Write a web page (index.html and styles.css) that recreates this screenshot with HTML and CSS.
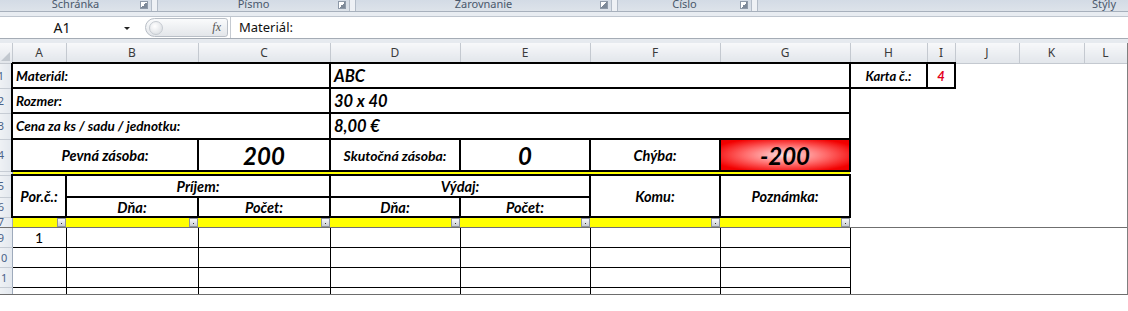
FILE: index.html
```html
<!DOCTYPE html>
<html lang="sk">
<head>
    <meta charset="UTF-8">
    <title>Karta materiálu</title>
    <link rel="stylesheet" href="styles.css">
</head>
<body>
    <div class="ribbon">
        <div class="group w-clip"><span>Schránka</span><i class="launch"></i></div>
        <div class="group w-font"><span>Písmo</span><i class="launch"></i></div>
        <div class="group w-align"><span>Zarovnanie</span><i class="launch"></i></div>
        <div class="group w-num"><span>Číslo</span><i class="launch"></i></div>
        <div class="group w-style right"><span>Štýly</span></div>
    </div>
    <div class="ribbon-foot"></div>

    <div class="formula">
        <div class="namebox"><span class="ref">A1</span><span class="caret"></span></div>
        <div class="fxpill"><span class="knob"></span><span class="fx">fx</span></div>
        <div class="input">Materiál:</div>
    </div>
    <div class="formula-gap"></div>

    <div class="sheet">
        <table class="grid">
            <colgroup>
                <col class="c-rh"><col class="c-a"><col class="c-b"><col class="c-c"><col class="c-d">
                <col class="c-e"><col class="c-f"><col class="c-g"><col class="c-h"><col class="c-i">
                <col class="c-j"><col class="c-k"><col class="c-l">
            </colgroup>
            <tr class="hdr">
                <th class="corner"><span class="tri"></span></th>
                <th>A</th><th>B</th><th>C</th><th>D</th><th>E</th><th>F</th>
                <th>G</th><th>H</th><th>I</th><th>J</th><th>K</th><th>L</th>
            </tr>
            <tr class="r1">
                <th class="rh"><span>1</span></th>
                <td colspan="3" class="b2 lbl">Materiál:</td>
                <td colspan="4" class="b2 val">ABC</td>
                <td class="b2 karta">Karta č.:</td>
                <td class="b2 karta-no">4</td>
                <td></td><td></td><td></td>
            </tr>
            <tr class="r2">
                <th class="rh"><span>2</span></th>
                <td colspan="3" class="b2 lbl">Rozmer:</td>
                <td colspan="4" class="b2 val">30 x 40</td>
                <td></td><td></td><td></td><td></td><td></td>
            </tr>
            <tr class="r3">
                <th class="rh"><span>3</span></th>
                <td colspan="3" class="b2 lbl">Cena za ks / sadu / jednotku:</td>
                <td colspan="4" class="b2 val">8,00 €</td>
                <td></td><td></td><td></td><td></td><td></td>
            </tr>
            <tr class="r4">
                <th class="rh"><span>4</span></th>
                <td colspan="2" class="b2 cap">Pevná zásoba:</td>
                <td class="b2 big">200</td>
                <td class="b2 cap small">Skutočná zásoba:</td>
                <td class="b2 big">0</td>
                <td class="b2 cap">Chýba:</td>
                <td class="b2 big missing">-200</td>
                <td></td><td></td><td></td><td></td><td></td>
            </tr>
            <tr class="sep">
                <th class="rh"></th>
                <td colspan="7" class="stripe"></td>
                <td></td><td></td><td></td><td></td><td></td>
            </tr>
            <tr class="r5">
                <th class="rh"><span>5</span></th>
                <td rowspan="2" class="b2 head">Por.č.:</td>
                <td colspan="2" class="b2 head">Príjem:</td>
                <td colspan="2" class="b2 head">Výdaj:</td>
                <td rowspan="2" class="b2 head">Komu:</td>
                <td rowspan="2" class="b2 head">Poznámka:</td>
                <td></td><td></td><td></td><td></td><td></td>
            </tr>
            <tr class="r6">
                <th class="rh"><span>6</span></th>
                <td class="b2 head">Dňa:</td>
                <td class="b2 head">Počet:</td>
                <td class="b2 head">Dňa:</td>
                <td class="b2 head">Počet:</td>
                <td></td><td></td><td></td><td></td><td></td>
            </tr>
            <tr class="r7 frozen">
                <th class="rh"><span>7</span></th>
                <td class="flt"><i class="drop"></i></td>
                <td class="flt"><i class="drop"></i></td>
                <td class="flt"><i class="drop"></i></td>
                <td class="flt"><i class="drop"></i></td>
                <td class="flt"><i class="drop"></i></td>
                <td class="flt"><i class="drop"></i></td>
                <td class="flt"><i class="drop"></i></td>
                <td></td><td></td><td></td><td></td><td></td>
            </tr>
            <tr class="row">
                <th class="rh"><span>9</span></th>
                <td class="b1 no">1</td><td class="b1"></td><td class="b1"></td><td class="b1"></td>
                <td class="b1"></td><td class="b1"></td><td class="b1"></td>
                <td></td><td></td><td></td><td></td><td></td>
            </tr>
            <tr class="row">
                <th class="rh"><span>10</span></th>
                <td class="b1"></td><td class="b1"></td><td class="b1"></td><td class="b1"></td>
                <td class="b1"></td><td class="b1"></td><td class="b1"></td>
                <td></td><td></td><td></td><td></td><td></td>
            </tr>
            <tr class="row">
                <th class="rh"><span>11</span></th>
                <td class="b1"></td><td class="b1"></td><td class="b1"></td><td class="b1"></td>
                <td class="b1"></td><td class="b1"></td><td class="b1"></td>
                <td></td><td></td><td></td><td></td><td></td>
            </tr>
            <tr class="row">
                <th class="rh"><span>12</span></th>
                <td class="b1"></td><td class="b1"></td><td class="b1"></td><td class="b1"></td>
                <td class="b1"></td><td class="b1"></td><td class="b1"></td>
                <td></td><td></td><td></td><td></td><td></td>
            </tr>
        </table>
    </div>
</body>
</html>
```

FILE: styles.css
```css
body {
    margin: 0;
    background-color: #fff;
    font-family: "Noto Sans", Arial, sans-serif;
    overflow: hidden;
}

/* ribbon bottom strip */
.ribbon {
    display: flex;
    gap: 5px;
    height: 11px;
    background-color: #eef1f5;
    border-bottom: 1px solid #a7b0bc;
    overflow: hidden;
}

.group {
    position: relative;
    height: 11px;
    background: linear-gradient(#d3dbe5, #dde3ea);
    border-left: 1px solid #b3bcc8;
    border-right: 1px solid #b3bcc8;
    box-sizing: border-box;
    text-align: center;
    font-size: 11px;
    line-height: 11px;
    color: #4a586b;
}

.group span {
    display: block;
    margin-top: -2px;
}

.group.right {
    text-align: right;
    padding-right: 12px;
    border-right: none;
}

.w-clip { width: 152px; border-left: none; }
.w-font { width: 193px; }
.w-align { width: 257px; }
.w-num { width: 135px; }
.w-style { flex: 1; }

.launch {
    position: absolute;
    right: 3px;
    top: 1px;
    width: 6px;
    height: 6px;
    border: 1px solid #8d99a8;
    background: linear-gradient(135deg, #fff 50%, #7d8998 50%);
}

.ribbon-foot {
    height: 4px;
    background-color: #e8ecf1;
    border-bottom: 1px solid #bfc6cf;
}

/* formula bar */
.formula {
    display: flex;
    align-items: center;
    height: 21px;
    background-color: #fff;
    border-bottom: 1px solid #a5acb5;
    font-size: 13px;
}

.namebox {
    display: flex;
    align-items: center;
    width: 142px;
    height: 21px;
}

.ref {
    width: 124px;
    text-align: center;
    font-size: 14px;
    color: #111;
}

.caret {
    width: 0;
    height: 0;
    border-left: 3px solid transparent;
    border-right: 3px solid transparent;
    border-top: 3px solid #222;
    margin-top: 1px;
}

.fxpill {
    display: flex;
    align-items: center;
    justify-content: space-between;
    width: 83px;
    height: 19px;
    margin-left: 3px;
    box-sizing: border-box;
    padding: 0 6px 0 3px;
    border: 1px solid #b8bec6;
    border-radius: 10px 3px 3px 10px;
    background: linear-gradient(#fafbfc, #e3e6ea);
}

.knob {
    width: 12px;
    height: 12px;
    border-radius: 50%;
    border: 1px solid #c6cbd1;
    background: radial-gradient(circle at 40% 35%, #fff, #d5d9de);
}

.fx {
    font-family: "Liberation Serif", serif;
    font-style: italic;
    font-size: 12px;
    color: #555;
}

.input {
    flex: 1;
    height: 21px;
    line-height: 21px;
    margin-left: 2px;
    padding-left: 8px;
    border-left: 1px solid #c5cad1;
    color: #111;
}

.formula-gap {
    height: 4px;
    background-color: #e6eaef;
}

/* sheet */
.sheet {
    width: 1127px;
    height: 251px;
    overflow: hidden;
    border-right: 1px solid #7f7f7f;
    border-bottom: 1px solid #6d6d6d;
}

.grid {
    table-layout: fixed;
    border-collapse: collapse;
    width: 1127px;
    font-family: Lato, "Noto Sans", sans-serif;
}

.c-rh { width: 12px; }
.c-a { width: 54px; }
.c-b { width: 132px; }
.c-c { width: 132px; }
.c-d { width: 130px; }
.c-e { width: 130px; }
.c-f { width: 130px; }
.c-g { width: 130px; }
.c-h { width: 77px; }
.c-i { width: 28px; }
.c-j { width: 64px; }
.c-k { width: 65px; }
.c-l { width: 43px; }

.grid td {
    padding: 0 3px;
    white-space: nowrap;
    overflow: hidden;
}

.hdr th {
    height: 19px;
    padding: 0;
    background: linear-gradient(#f7f8fa, #e2e6eb);
    border: 1px solid #c4c9d0;
    border-top: none;
    font-family: "Noto Sans", sans-serif;
    font-weight: normal;
    font-size: 12px;
    color: #3a3a3a;
}

.hdr .corner {
    position: relative;
    border-left: none;
}

.tri {
    position: absolute;
    right: 2px;
    bottom: 2px;
    width: 0;
    height: 0;
    border-left: 9px solid transparent;
    border-bottom: 9px solid #c2c8cf;
}

.rh {
    padding: 0;
    overflow: hidden;
    background: linear-gradient(90deg, #eef1f4, #e3e8ee);
    border-right: 1px solid #9eaabb;
    border-bottom: 1px solid #c6ccd4;
    font-family: "Noto Sans", sans-serif;
    font-weight: normal;
    font-size: 11px;
    line-height: 8px;
    color: #4a6288;
}

.rh span {
    display: block;
    width: 24px;
    height: 8px;
    margin-left: -11px;
    text-align: center;
}

.r1 { height: 25px; }
.r2 { height: 25px; }
.r3 { height: 26px; }
.r4 { height: 32px; }
.sep { height: 4px; }
.r5 { height: 22px; }
.r6 { height: 20px; }
.r7 { height: 10px; }
.row { height: 20px; }

.b2 { border: 2px solid #000; }
.b1 { border: 1px solid #000; }

.lbl {
    font-weight: bold;
    font-style: italic;
    font-size: 13.5px;
    text-align: left;
}

.val {
    font-weight: bold;
    font-style: italic;
    font-size: 16.5px;
    text-align: left;
}

.karta {
    font-weight: bold;
    font-style: italic;
    font-size: 13px;
    text-align: center;
}

.karta-no {
    font-weight: bold;
    font-style: italic;
    font-size: 13px;
    text-align: center;
    color: #e3001b;
}

.cap {
    font-weight: bold;
    font-style: italic;
    font-size: 14.5px;
    text-align: center;
}

.cap.small { font-size: 14px; }

.big {
    font-weight: bold;
    font-style: italic;
    font-size: 24px;
    text-align: center;
}

.missing {
    background: radial-gradient(ellipse at center, #ffe0e0 0%, #ff6b6b 45%, #f20000 85%, #e80000 100%);
}

.stripe {
    padding: 0;
    background-color: #ffff00;
    border-top: 2px solid #000;
    border-bottom: 2px solid #000;
}

.head {
    font-weight: bold;
    font-style: italic;
    font-size: 14.5px;
    text-align: center;
}

.frozen th,
.frozen td {
    border-bottom: 1px solid #6f6f6f;
}

.grid .flt {
    background-color: #ffff00;
    vertical-align: top;
    font-size: 0;
    line-height: 0;
    padding: 0;
}

.drop {
    display: block;
    float: right;
    width: 7px;
    height: 7px;
    border: 1px solid #8e949b;
    background: linear-gradient(#f7f8f9, #c9cdd2);
    position: relative;
}

.drop::after {
    content: "";
    position: absolute;
    left: 3px;
    top: 4px;
    width: 1px;
    height: 1px;
    background-color: #333;
}

.no {
    text-align: center;
    font-family: Lato, "Noto Sans", sans-serif;
    font-size: 14px;
}
```
